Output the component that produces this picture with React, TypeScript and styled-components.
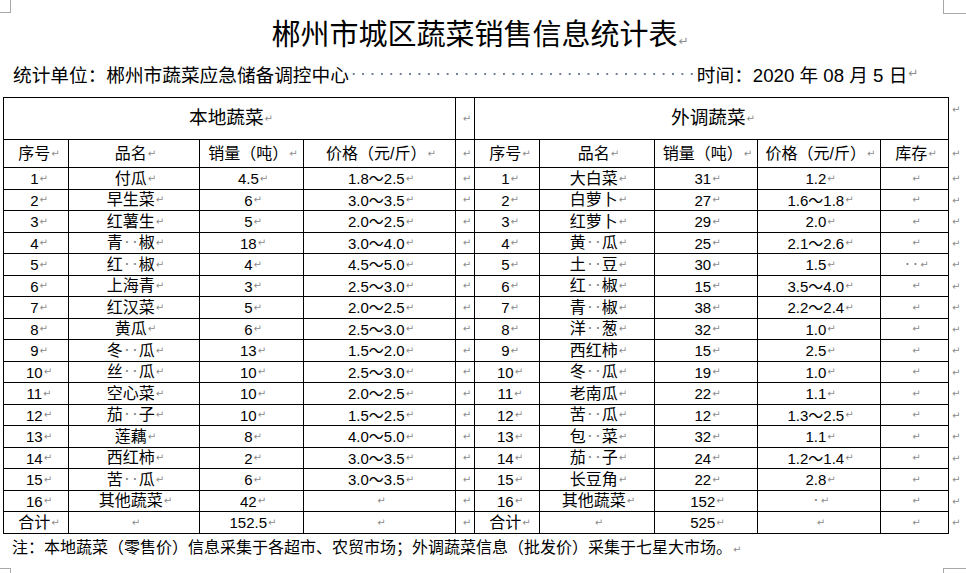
import React, { FC, ReactNode } from 'react';
import styled, { createGlobalStyle } from 'styled-components';

const GlobalStyle = createGlobalStyle`
  html, body {
    margin: 0;
    padding: 0;
    background: #fff;
  }
  body {
    font-family: "Liberation Sans", "Noto Sans CJK SC", sans-serif;
    color: #000;
  }
`;

const Page = styled.div`
  position: relative;
  width: 966px;
  height: 573px;
  overflow: hidden;
  background: #fff;
`;

const Corner = styled.div<{ $pos: 'tl' | 'tr' | 'bl' | 'br' }>`
  position: absolute;
  box-sizing: border-box;
  border: 0 solid #a8a8a8;
  ${({ $pos }) =>
    $pos === 'tl'
      ? 'left: 0; top: 0; width: 11px; height: 13px; border-right-width: 1px; border-bottom-width: 1px;'
      : $pos === 'tr'
      ? 'left: 943px; top: 0; width: 23px; height: 14px; border-left-width: 1px; border-bottom-width: 1px;'
      : $pos === 'bl'
      ? 'left: 0; top: 568px; width: 11px; height: 5px; border-right-width: 1px; border-top-width: 1px;'
      : 'left: 943px; top: 568px; width: 23px; height: 5px; border-left-width: 1px; border-top-width: 1px;'}
`;

const Title = styled.h1`
  margin: 0;
  padding: 14px 6px 0 0;
  font-family: "Noto Sans CJK SC", sans-serif;
  font-weight: 400;
  font-size: 29px;
  line-height: 36px;
  text-align: center;
`;

const InfoLine = styled.div`
  display: flex;
  align-items: center;
  height: 24px;
  margin-top: 2px;
  padding-left: 13px;
  font-size: 18.67px;
  white-space: nowrap;
`;

const DotFill = styled.span<{ $width: number }>`
  display: inline-block;
  width: ${({ $width }) => $width}px;
  height: 4px;
  background-image: radial-gradient(circle, #6e7c94 1.1px, transparent 1.5px);
  background-size: 9.4px 4px;
  background-position: 0 1px;
`;

const Mark = styled.span<{ $big?: boolean }>`
  font-family: "DejaVu Sans", sans-serif;
  font-size: ${({ $big }) => ($big ? 12 : 10)}px;
  color: #8c8c8c;
  margin-left: 1px;
`;

const Sp = styled.span`
  display: inline-block;
  width: 8px;
  text-align: center;
  font-family: "DejaVu Sans", sans-serif;
  font-size: 10px;
  font-weight: 700;
  color: #8a8a8a;
`;

const TableWrap = styled.div`
  display: flex;
  margin-top: 12px;
  margin-left: 3px;
`;

const colTemplate = '64px 130px 103px 151px 18px 64px 114px 102px 122px 67px';
const rowTemplate =
  '41px 27px ' +
  Array.from({ length: 17 }, (_, i) => (i % 2 === 0 ? '21px' : '20px')).join(' ');

const Grid = styled.div`
  display: grid;
  grid-template-columns: ${colTemplate};
  grid-template-rows: ${rowTemplate};
  gap: 1px;
  padding: 1px;
  background: #000;
`;

const Cell = styled.div<{ $span?: number; $num?: boolean; $big?: boolean; $first?: boolean }>`
  grid-column: span ${({ $span }) => $span ?? 1};
  display: flex;
  align-items: center;
  justify-content: center;
  padding-left: ${({ $first }) => ($first ? 6 : 3)}px;
  background: #fff;
  white-space: nowrap;
  font-size: ${({ $num, $big }) => ($big ? 18.67 : $num ? 15 : 16)}px;
  line-height: 1;
`;

const RowMarks = styled.div`
  display: grid;
  grid-template-rows: ${rowTemplate};
  gap: 1px;
  padding: 1px 0;
  width: 16px;
`;

const RowMark = styled.div<{ $top?: boolean }>`
  display: flex;
  align-items: ${({ $top }) => ($top ? 'flex-start' : 'center')};
  padding-top: ${({ $top }) => ($top ? 6 : 0)}px;
  padding-left: 3px;
  font-family: "DejaVu Sans", sans-serif;
  font-size: 10px;
  color: #8c8c8c;
`;

const Note = styled.div`
  padding-left: 12px;
  margin-top: 2px;
  font-size: 16px;
  line-height: 24px;
  white-space: nowrap;
`;

const text = (s: string): ReactNode =>
  s.split(/( )/).map((part, i) => (part === ' ' ? <Sp key={i}>·</Sp> : part));

type Row = [string, string, string, string];
type RowR = [string, string, string, string, string];

const local: Row[] = [
  ['1', '付瓜', '4.5', '1.8～2.5'],
  ['2', '早生菜', '6', '3.0～3.5'],
  ['3', '红薯生', '5', '2.0～2.5'],
  ['4', '青  椒', '18', '3.0～4.0'],
  ['5', '红  椒', '4', '4.5～5.0'],
  ['6', '上海青', '3', '2.5～3.0'],
  ['7', '红汉菜', '5', '2.0～2.5'],
  ['8', '黄瓜', '6', '2.5～3.0'],
  ['9', '冬  瓜', '13', '1.5～2.0'],
  ['10', '丝  瓜', '10', '2.5～3.0'],
  ['11', '空心菜', '10', '2.0～2.5'],
  ['12', '茄  子', '10', '1.5～2.5'],
  ['13', '莲藕', '8', '4.0～5.0'],
  ['14', '西红柿', '2', '3.0～3.5'],
  ['15', '苦  瓜', '6', '3.0～3.5'],
  ['16', '其他蔬菜', '42', ''],
  ['合计', '', '152.5', ''],
];

const outside: RowR[] = [
  ['1', '大白菜', '31', '1.2', ''],
  ['2', '白萝卜', '27', '1.6～1.8', ''],
  ['3', '红萝卜', '29', '2.0', ''],
  ['4', '黄  瓜', '25', '2.1～2.6', ''],
  ['5', '土  豆', '30', '1.5', '  '],
  ['6', '红  椒', '15', '3.5～4.0', ''],
  ['7', '青  椒', '38', '2.2～2.4', ''],
  ['8', '洋  葱', '32', '1.0', ''],
  ['9', '西红柿', '15', '2.5', ''],
  ['10', '冬  瓜', '19', '1.0', ''],
  ['11', '老南瓜', '22', '1.1', ''],
  ['12', '苦  瓜', '12', '1.3～2.5', ''],
  ['13', '包  菜', '32', '1.1', ''],
  ['14', '茄  子', '24', '1.2～1.4', ''],
  ['15', '长豆角', '22', '2.8', ''],
  ['16', '其他蔬菜', '152', ' ', ''],
  ['合计', '', '525', '', ''],
];

const isNum = (s: string) => /^[0-9.～]+$/.test(s) && s !== '';

const C: FC<{ v: string; first?: boolean; span?: number; big?: boolean }> = ({ v, first, span, big }) => (
  <Cell $first={first} $span={span} $num={isNum(v)} $big={big}>
    {text(v)}
    <Mark>↵</Mark>
  </Cell>
);

const App: FC = () => {
  const heads = ['序号', '品名', '销量（吨）', '价格（元/斤）'];
  return (
    <Page>
      <GlobalStyle />
      <Corner $pos="tl" />
      <Corner $pos="tr" />
      <Corner $pos="bl" />
      <Corner $pos="br" />

      <Title>
        郴州市城区蔬菜销售信息统计表<Mark $big>↵</Mark>
      </Title>

      <InfoLine>
        统计单位：郴州市蔬菜应急储备调控中心
        <DotFill $width={348} />
        时间：2020 年 08 月 5 日<Mark $big>↵</Mark>
      </InfoLine>

      <TableWrap>
        <Grid>
          <C v="本地蔬菜" span={4} big />
          <C v="" />
          <C v="外调蔬菜" span={5} big />

          {heads.map((h, i) => (
            <C key={'l' + h} v={h} first={i === 0} />
          ))}
          <C v="" />
          {[...heads, '库存'].map((h, i) => (
            <C key={'r' + h} v={h} first={i === 0} />
          ))}

          {local.map((row, r) => (
            <React.Fragment key={r}>
              {row.map((v, i) => (
                <C key={'a' + i} v={v} first={i === 0} />
              ))}
              <C v="" />
              {outside[r].map((v, i) => (
                <C key={'b' + i} v={v} first={i === 0} />
              ))}
            </React.Fragment>
          ))}
        </Grid>
        <RowMarks>
          {Array.from({ length: 19 }, (_, i) => (
            <RowMark key={i} $top={i === 0}>
              ↵
            </RowMark>
          ))}
        </RowMarks>
      </TableWrap>

      <Note>
        注：本地蔬菜（零售价）信息采集于各超市、农贸市场；外调蔬菜信息（批发价）采集于七星大市场。<Mark>↵</Mark>
      </Note>
    </Page>
  );
};

export default App;
